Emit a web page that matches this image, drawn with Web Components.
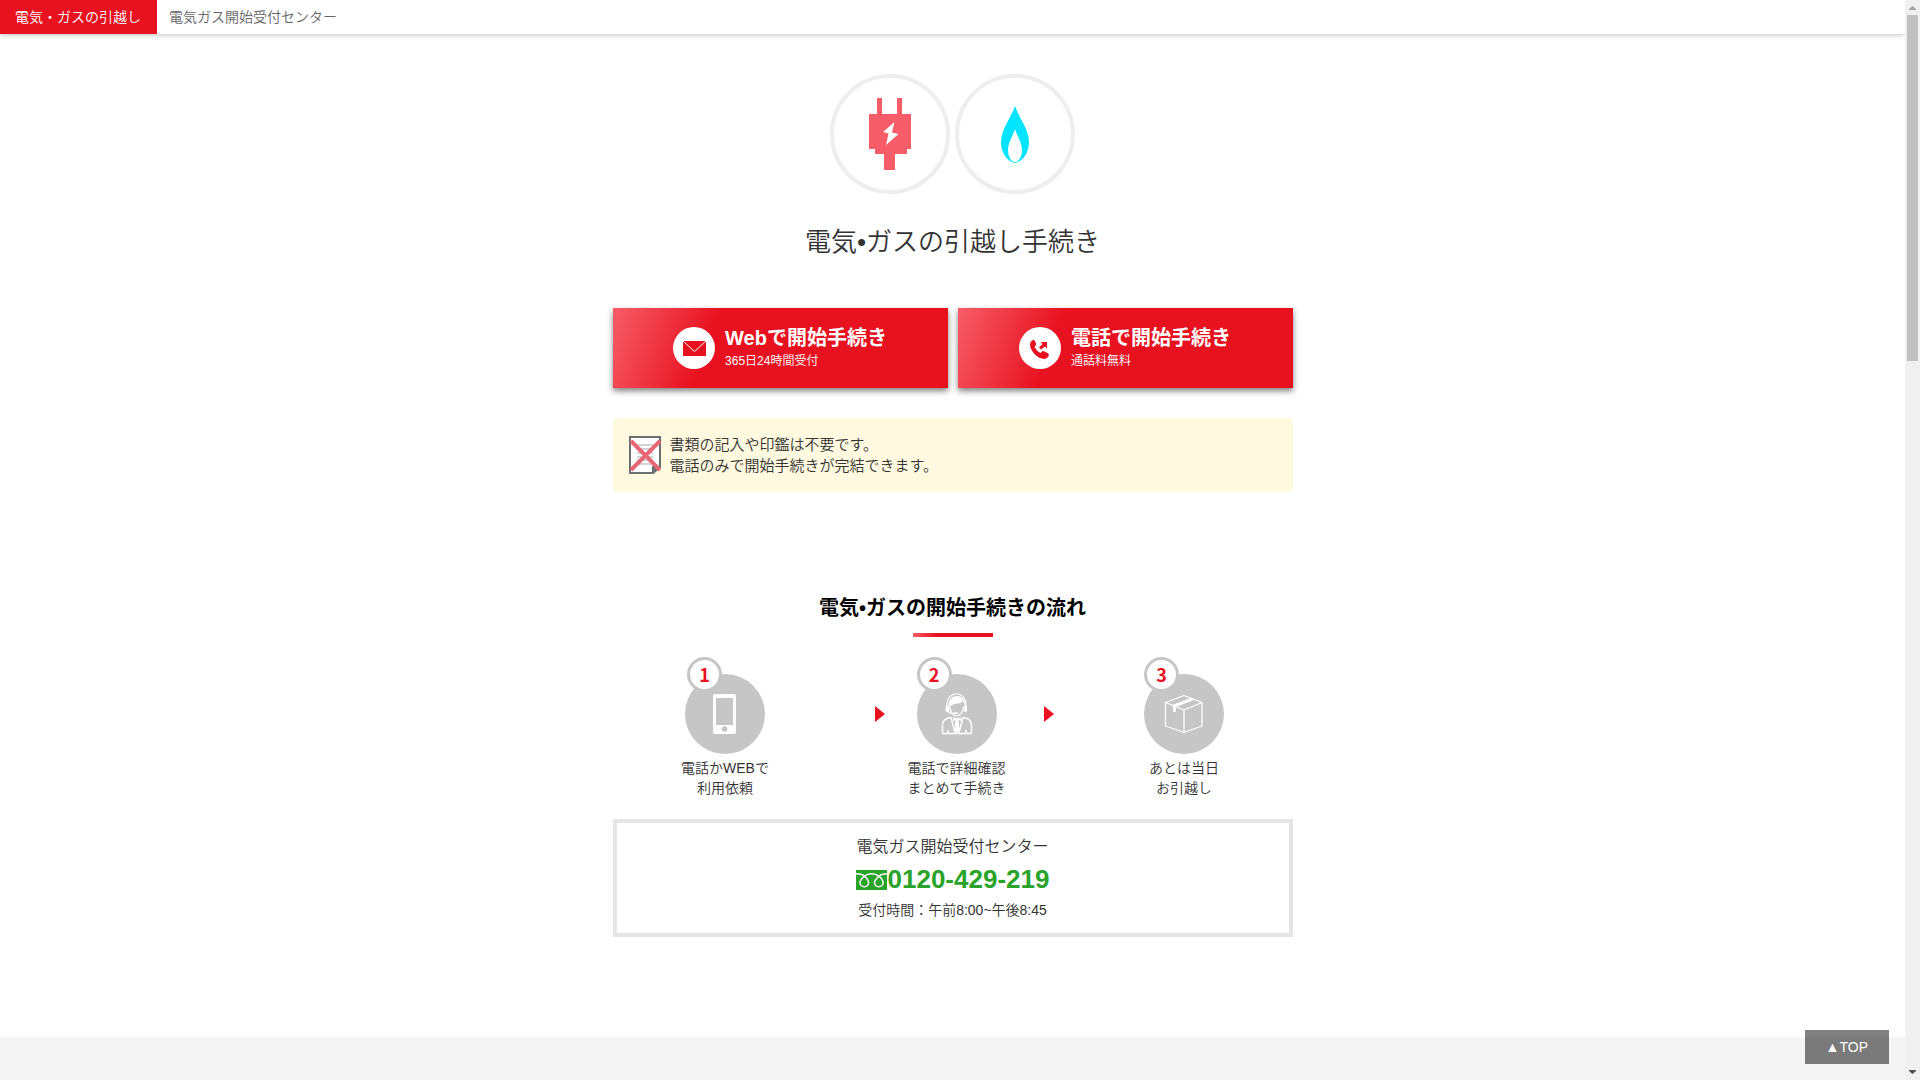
<!DOCTYPE html>
<html lang="ja">
<head>
<meta charset="utf-8">
<title>電気・ガスの引越し手続き</title>
<style>
html, body { margin: 0; height: 100%; }
body { overflow: hidden; background: #fff; color: #333; font: 350 14px/20px "Liberation Sans", "Noto Sans CJK JP", sans-serif; }
</style>
</head>
<body>
<moving-page></moving-page>

<template id="t-page">
<style>
:host { display: flex; height: 100vh; overflow: hidden; }
.view { flex: 1; min-width: 0; height: 100%; overflow: hidden; position: relative; }
main { max-width: 680px; margin: 0 auto; padding: 40px 0 100px; }
.emblems { display: flex; justify-content: center; gap: 5px; }
.emblems svg { width: 120px; height: 120px; display: block; }
h1 { margin: 29px 0 46px; font-size: 26px; line-height: 39px; font-weight: inherit; text-align: center; }
.actions { display: flex; gap: 10px; }
.actions cta-button { flex: 1; }
notice-box { margin: 30px 0 101px; }
.steps { display: flex; align-items: flex-start; margin: 37px 0 21px; }
.steps flow-step { flex: 217 1 0; }
.steps flow-step.first { flex-grow: 225; }
.steps flow-step.mid { flex: 0 0 100px; }
.steps i { width: 0; height: 0; margin: 32px 22px 0 37px; border: solid transparent; border-width: 8px 0 8px 10px; border-left-color: #e8111f; }
footer { height: 400px; background: #f4f4f4; }
.top { position: absolute; right: 16px; bottom: 16px; padding: 7px 21px; background: rgba(0,0,0,.5); color: #fff; text-decoration: none; line-height: 20px; }
</style>
<div class="view">
<site-header><span slot="tag">電気・ガスの引越し</span>電気ガス開始受付センター</site-header>
<main>
<div class="emblems">
<svg viewBox="0 0 120 120"><circle cx="60" cy="60" r="58" fill="#fff" stroke="#eee" stroke-width="4"/><path fill="#f65d68" d="M47 24h5v16h15V24h5v16h9v35h-4v5H65v16H54V80h-9v-5h-6V40h8z"/><path fill="#fff" d="M64.500 48L53 58l5.500 1.500L56 71l12.500-11-6.500-1.500z"/></svg>
<svg viewBox="0 0 120 120"><circle cx="60" cy="60" r="58" fill="#fff" stroke="#eee" stroke-width="4"/><path fill="#00e4ff" d="M60 32C64 44 74 55 74 68c0 11-6 19-14 21-8-2-14-10-14-21 0-13 10-24 14-36z"/><path fill="#fff" d="M60 55c2 7 7 13 7 21 0 6-3 12-7 12s-7-6-7-12c0-8 5-14 7-21z"/></svg>
</div>
<h1>電気•ガスの引越し手続き</h1>
<div class="actions">
<cta-button href="#web"><svg slot="icon" viewBox="0 0 42 42"><circle cx="21" cy="21" r="21" fill="#fff"/><path fill="#e8111f" d="M10 14h23v15H10z"/><path d="M10 14l11.500 10.500L33 14" fill="none" stroke="#fff" stroke-width="1"/></svg>Webで開始手続き<span slot="sub">365日24時間受付</span></cta-button>
<cta-button href="#tel"><svg slot="icon" viewBox="0 0 42 42"><circle cx="21" cy="21" r="21" fill="#fff"/><path fill="#e8111f" d="M12 14.500q1.500-2 3-1.500 1 .5 2 3.500.5 1.500-1.500 3.500 2 4 6 6 2-2.500 3.500-1.800l4 2q1.500.8.500 3-1.500 2.800-4 2.800-5.500-.2-10-5-4.500-4.800-4.500-10 .2-1.500 1-2.500z"/><path fill="#e8111f" d="M21.500 15H28v6.500L26 19.500l-4 3-2-2 3.500-3.500z"/></svg>電話で開始手続き<span slot="sub">通話料無料</span></cta-button>
</div>
<notice-box>書類の記入や印鑑は不要です。<br>電話のみで開始手続きが完結できます。</notice-box>
<section-title>電気•ガスの開始手続きの流れ</section-title>
<div class="steps">
<flow-step no="1" class="first"><svg slot="icon" viewBox="0 0 80 80"><rect x="28" y="20" width="23" height="40" rx="2" fill="#fff"/><path fill="#c6c6c6" d="M31 24h17v27H31z"/><circle cx="39.500" cy="55" r="2.800" fill="#c6c6c6"/></svg>電話かWEBで<br>利用依頼</flow-step>
<i></i>
<flow-step no="2" class="mid"><svg slot="icon" viewBox="0 0 80 80" fill="none" stroke="#fff" stroke-width="1.200"><path d="M30 31c0-15 19-15 19 0"/><path d="M33 33c0 5 4 9 6.500 9s7-4 7-9"/><path fill="#fff" stroke="none" d="M32 32c-1-6 3-10 8-10s9 4 8 10l-2-5c-4 4-7 1-12 5z"/><rect x="28.500" y="31" width="4" height="7" rx="2" fill="#fff" stroke="none"/><rect x="47" y="31" width="3" height="7" rx="1.500" fill="#fff" stroke="none"/><path d="M31 37c1 2 4 3 7 2.500"/><ellipse cx="39" cy="39" rx="2" ry="1" fill="#fff" stroke="none"/><path stroke-width="1.500" stroke-linejoin="round" d="M34 43.500c-5 .5-8.500 3-8.500 8V59.500h29v-8c0-5-3.500-7.500-8.500-8M31 60v-4M49 60v-4M34 43.500l4 15M46 43.500l-4 15"/><path fill="#fff" stroke="none" d="M36 43l2.500 1h3l2.500-1v4l-2.500-1 1 9-2.500 5-2.500-5 1-9-2.500 1z"/></svg>電話で詳細確認<br>まとめて手続き</flow-step>
<i></i>
<flow-step no="3"><svg slot="icon" viewBox="0 0 80 80" fill="none" stroke="#fff" stroke-width="1.300" stroke-linejoin="round"><path d="M21.500 28.500L40 21.500l18 7V52l-18 6.500L21.500 52zM21.500 28.500L40 36l18-7.500M40 36v22.500"/><path fill="#fff" stroke="none" d="M28 31l19-7 4 1.500L32 33v5h-3v-5z"/></svg>あとは当日<br>お引越し</flow-step>
</div>
<contact-box></contact-box>
</main>
<footer></footer>
<a class="top" href="#top">▲TOP</a>
</div>
<scroll-rail></scroll-rail>
</template>

<template id="t-header">
<style>
:host { display: flex; height: 34px; line-height: 34px; background: #fff; color: #666; box-shadow: 0 1px 5px rgba(0,0,0,.25); }
.tag { padding: 0 16px 0 15px; background: #e8111f; color: #fff; }
.name { padding: 0 12px; }
</style>
<div class="tag"><slot name="tag"></slot></div><div class="name"><slot></slot></div>
</template>

<template id="t-cta">
<style>
:host { display: block; }
a { display: flex; align-items: center; justify-content: center; gap: 10px; height: 80px; color: #fff; text-decoration: none; background: linear-gradient(110deg, #f65d68, #e8111f 30%); box-shadow: 0 3px 6px rgba(0,0,0,.5); }
::slotted(svg) { display: block; width: 42px; height: 42px; }
.main { font-size: 20px; line-height: 26px; font-weight: 700; }
.sub { font-size: 12px; line-height: 20px; }
</style>
<a><slot name="icon"></slot><div><div class="main"><slot></slot></div><div class="sub"><slot name="sub"></slot></div></div></a>
</template>

<template id="t-notice">
<style>
:host { display: flex; align-items: center; gap: 9px; padding: 16px; background: #fff9e0; border-radius: 4px; font-size: 15px; line-height: 21px; }
svg { width: 32px; height: 40px; display: block; }
</style>
<svg viewBox="0 0 32 40"><path fill="#fff" stroke="#6b7072" stroke-width="2" d="M1 2h30v30l-7 6H1z"/><path fill="#6b7072" d="M23 38v-7h8v2l-7 6z"/><path stroke="#c5c6c9" stroke-width="1.500" d="M8 10h16M8 14h16M8 18h16M8 22h16M8 25h12M8 29h14"/><path stroke="#e86673" stroke-width="4" d="M2 6l29 29M31 6L2 35"/></svg>
<div><slot></slot></div>
</template>

<template id="t-title">
<style>
:host { display: block; }
h2 { margin: 0; font-size: 20px; line-height: 30px; color: #000; text-align: center; }
h2::after { content: ""; display: block; width: 80px; height: 4px; margin: 10px auto 0; background: linear-gradient(110deg, #f65d68, #e8111f 30%); }
</style>
<h2><slot></slot></h2>
</template>

<template id="t-step">
<style>
:host { display: flex; flex-direction: column; align-items: center; gap: 4px; text-align: center; white-space: nowrap; }
.disc { position: relative; width: 80px; height: 80px; border-radius: 50%; background: #c6c6c6; }
::slotted(svg) { display: block; width: 80px; height: 80px; }
b { position: absolute; left: 0; top: -17px; box-sizing: border-box; width: 35px; height: 35px; border: 3px solid #c6c6c6; border-radius: 50%; background: #fff; color: #e8111f; font: 700 18px/29px "Noto Sans CJK JP", sans-serif; }
:host(.first) b { left: 2px; }
</style>
<div class="disc"><slot name="icon"></slot><b></b></div><div><slot></slot></div>
</template>

<template id="t-contact">
<style>
:host { display: block; padding: 11px 10px 12px; border: 4px solid #e5e5e5; text-align: center; }
.name { font-size: 16px; line-height: 26px; }
a { display: flex; justify-content: center; align-items: center; gap: 1px; font-size: 26px; line-height: 39px; font-weight: 700; color: #29a329; text-decoration: none; }
svg { width: 31px; height: 20px; display: block; }
.hours { line-height: 22px; }
</style>
<div class="name">電気ガス開始受付センター</div>
<a href="tel:0120-429-219"><svg viewBox="0 0 31 20"><path fill="#29a329" d="M0 0h31v20H0z"/><path fill="none" stroke="#fff" stroke-width="1.500" d="M8.500 6C5 9 4 10.500 4 12.500a4.300 4.300 0 0 0 8.600 0C12.600 10.500 11.500 9 8.500 6zM23 6c-3 3-4.500 4.500-4.500 6.500a4.300 4.300 0 0 0 8.600 0C27.100 10.500 26 9 23 6zM0 3.700c4 0 6.500.3 8.500 2.600M8.500 6.300C12 3 19 3 23 6.300M23 6.300c2-2.300 4-2.600 8-2.600"/></svg><span>0120-429-219</span></a>
<div class="hours">受付時間：午前8:00~午後8:45</div>
</template>

<template id="t-rail">
<style>
:host { display: flex; flex-direction: column; align-items: center; flex: 0 0 15px; height: 100%; background: #f0f0f0; }
.thumb { width: 11px; height: 32%; background: #c0c0c0; margin-bottom: auto; }
svg { width: 15px; height: 15px; flex: none; display: block; }
</style>
<svg viewBox="0 0 15 15"><path fill="#a3a3a3" d="M4 10V9l3.500-3L11 9v1z"/></svg><div class="thumb"></div><svg viewBox="0 0 15 15"><path fill="#505050" d="M4 5v1l3.500 3L11 6V5z"/></svg>
</template>

<script>
class Base extends HTMLElement {
  constructor() {
    super();
    this.attachShadow({ mode: "open" }).append(document.importNode(document.getElementById(this.constructor.tpl).content, true));
  }
}
customElements.define("site-header", class extends Base { static tpl = "t-header"; });
customElements.define("cta-button", class extends Base {
  static tpl = "t-cta";
  connectedCallback() { this.shadowRoot.querySelector("a").href = this.getAttribute("href"); }
});
customElements.define("notice-box", class extends Base { static tpl = "t-notice"; });
customElements.define("section-title", class extends Base { static tpl = "t-title"; });
customElements.define("flow-step", class extends Base {
  static tpl = "t-step";
  connectedCallback() { this.shadowRoot.querySelector("b").textContent = this.getAttribute("no"); }
});
customElements.define("contact-box", class extends Base { static tpl = "t-contact"; });
customElements.define("scroll-rail", class extends Base { static tpl = "t-rail"; });
customElements.define("moving-page", class extends Base { static tpl = "t-page"; });
</script>
</body>
</html>
